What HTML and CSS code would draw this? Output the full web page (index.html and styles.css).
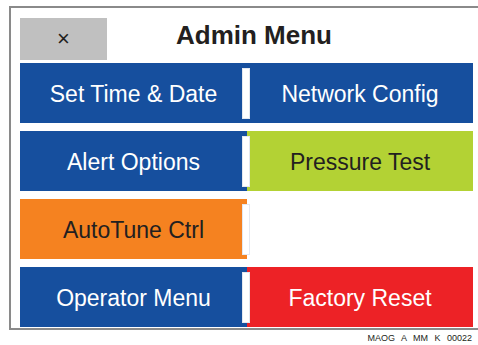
FILE: index.html
```html
<!DOCTYPE html>
<html lang="en">
<head>
  <meta charset="UTF-8">
  <title>Admin Menu</title>
  <link rel="stylesheet" href="styles.css">
</head>
<body>
  <section class="panel">
    <div class="header">
      <button class="close">&times;</button>
      <h1 class="title">Admin Menu</h1>
    </div>
    <div class="menu">
      <div class="btn blue split">Set Time &amp; Date</div>
      <div class="btn blue">Network Config</div>
      <div class="btn blue split">Alert Options</div>
      <div class="btn green">Pressure Test</div>
      <div class="btn orange split">AutoTune Ctrl</div>
      <div class="empty"></div>
      <div class="btn blue split">Operator Menu</div>
      <div class="btn red">Factory Reset</div>
    </div>
  </section>
  <p class="code">MAOG A MM K 00022</p>
</body>
</html>
```

FILE: styles.css
```css
body {
  margin: 0;
  background: #fff;
  font-family: "Liberation Sans", Arial, sans-serif;
  color: #231f20;
}
.panel {
  margin: 6px 0 0 9px;
  border-top: 2px solid #8a8a8a;
  border-left: 2px solid #8a8a8a;
  border-bottom: 2px solid #8a8a8a;
  padding: 10px 0 1px 9px;
}
.header {
  display: flex;
  align-items: center;
  height: 42px;
}
.close {
  width: 87px;
  height: 42px;
  border: 0;
  padding: 0;
  background: #c0c0c0;
  color: #231f20;
  font-family: "Liberation Sans", Arial, sans-serif;
  font-size: 22px;
  line-height: 42px;
}
.title {
  margin: 0 0 0 69px;
  font-size: 26px;
  font-weight: bold;
  position: relative;
  top: -4px;
}
.menu {
  display: grid;
  grid-template-columns: 227px 226px;
  grid-auto-rows: 60px;
  row-gap: 8px;
  margin-top: 3px;
}
.btn {
  display: flex;
  align-items: center;
  justify-content: center;
  padding-top: 2px;
  font-size: 23px;
  position: relative;
}
.blue {
  background: #164f9e;
  color: #fff;
}
.red {
  background: #ed2226;
  color: #fff;
}
.green {
  background: #b3d234;
}
.orange {
  background: #f58220;
}
.split::after {
  content: "";
  position: absolute;
  top: 5px;
  bottom: 4px;
  right: -3px;
  width: 6px;
  background: #fff;
  border: 1px solid #e3e8f0;
  z-index: 1;
}
.code {
  margin: 3px 6px 0 0;
  text-align: right;
  font-size: 9px;
  word-spacing: 4px;
}
```
